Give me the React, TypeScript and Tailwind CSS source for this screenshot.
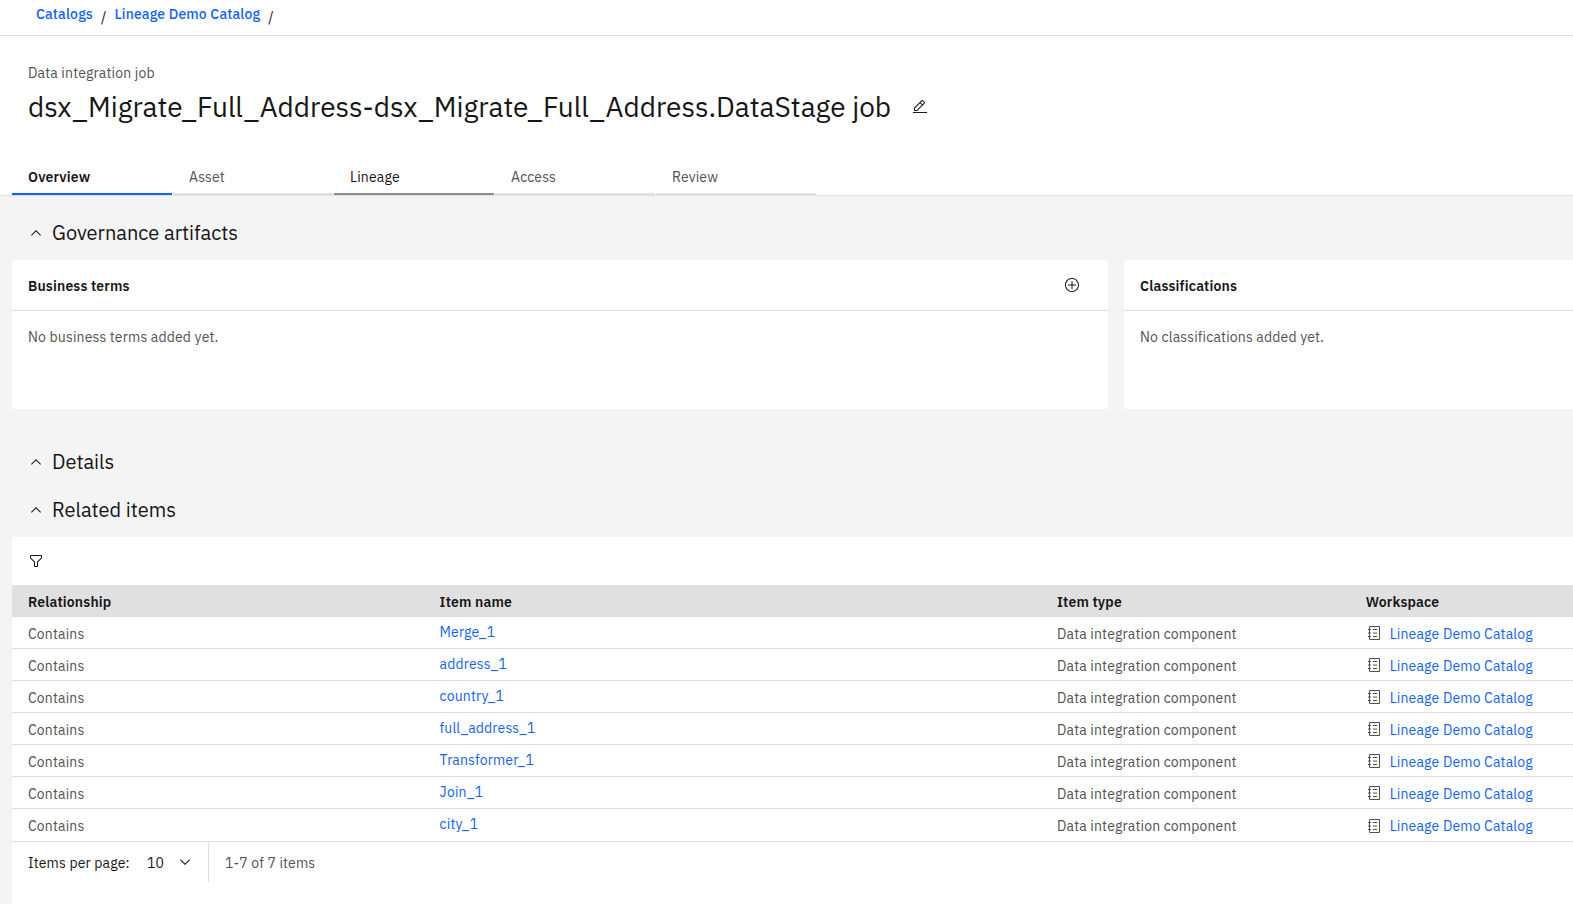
import React from 'react';

type IconProps = { paths: string[]; size?: 16 | 32; className?: string };

function Icon({ paths, size = 32, className = '' }: IconProps) {
  return (
    <svg viewBox={`0 0 ${size} ${size}`} className={`h-4 w-4 shrink-0 fill-current ${className}`} aria-hidden="true">
      {paths.map((d) => (
        <path key={d} d={d} />
      ))}
    </svg>
  );
}

const edit = [
  'M2 26H30V28H2z',
  'M25.4 9c.8-.8.8-2 0-2.8l-3.6-3.6c-.8-.8-2-.8-2.8 0l-15 15V24h6.4L25.4 9zM20.4 4L24 7.6l-3 3L17.4 7 20.4 4zM6 22v-3.6l10-10 3.6 3.6-10 10H6z',
];
const chevronUp = ['M8 5L13 10 12.3 10.7 8 6.4 3.7 10.7 3 10z'];
const chevronDown = ['M8 11L3 6 3.7 5.3 8 9.6 12.3 5.3 13 6z'];
const addAlt = [
  'M16 4c6.6 0 12 5.4 12 12s-5.4 12-12 12S4 22.6 4 16 9.4 4 16 4M16 2C8.3 2 2 8.3 2 16s6.3 14 14 14 14-6.3 14-14S23.7 2 16 2z',
  'M24 15L17 15 17 8 15 8 15 15 8 15 8 17 15 17 15 24 17 24 17 17 24 17z',
];
const filter = [
  'M18 28H14a2 2 0 0 1-2-2V18.41L4.59 11A2 2 0 0 1 4 9.59V6A2 2 0 0 1 6 4H26a2 2 0 0 1 2 2V9.59A2 2 0 0 1 27.41 11L20 18.41V26A2 2 0 0 1 18 28ZM6 6V9.59l8 8V26h4V17.59l8-8V6Z',
];
const catalog = [
  'M26 2H8A2 2 0 0 0 6 4V8H4v2H6v5H4v2H6v5H4v2H6v4a2 2 0 0 0 2 2H26a2 2 0 0 0 2-2V4A2 2 0 0 0 26 2Zm0 26H8V24h2V22H8V17h2V15H8V10h2V8H8V4H26Z',
  'M14 8H22V10H14z',
  'M14 15H22V17H14z',
  'M14 22H22V24H14z',
];

const tabs = [
  { label: 'Overview', style: 'border-[#0f62fe] font-semibold text-[#161616]' },
  { label: 'Asset', style: 'border-[#e0e0e0] text-[#525252]' },
  { label: 'Lineage', style: 'border-[#8d8d8d] text-[#161616]' },
  { label: 'Access', style: 'border-[#e0e0e0] text-[#525252]' },
  { label: 'Review', style: 'border-[#e0e0e0] text-[#525252]' },
];

const items = ['Merge_1', 'address_1', 'country_1', 'full_address_1', 'Transformer_1', 'Join_1', 'city_1'];

function SectionTitle({ children }: { children: React.ReactNode }) {
  return (
    <h2 className="flex h-12 items-center gap-2 pl-7 text-xl leading-7 tracking-normal">
      <Icon paths={chevronUp} size={16} />
      {children}
    </h2>
  );
}

function Card({ title, text, className, action }: { title: string; text: string; className: string; action?: boolean }) {
  return (
    <section className={`h-[149px] shrink-0 bg-white ${className}`}>
      <header className="flex h-[51px] items-center justify-between border-b border-[#e0e0e0] pr-7 pl-4">
        <h3 className="pt-0.5 font-semibold">{title}</h3>
        {action && <Icon paths={addAlt} />}
      </header>
      <p className="px-4 pt-[17px] text-[#525252]">{text}</p>
    </section>
  );
}

export default function App() {
  return (
    <div className="h-[904px] w-full overflow-hidden bg-[#f4f4f4] font-['IBM_Plex_Sans',Roboto,sans-serif] text-sm leading-[18px] tracking-[0.16px] text-[#161616]">
      <nav className="flex h-9 gap-2 border-b border-[#e0e0e0] bg-white pt-[5px] pl-9">
        <a className="font-medium text-[#0f62fe]">Catalogs</a>
        <span className="pt-[3px]">/</span>
        <a className="font-medium text-[#0f62fe]">Lineage Demo Catalog</a>
        <span className="pt-[3px]">/</span>
      </nav>

      <header className="h-40 border-b border-[#e0e0e0] bg-white pt-7">
        <p className="pl-7 text-[#525252]">Data integration job</p>
        <div className="mt-[7px] flex h-9 items-center gap-[21px] pl-7">
          <h1 className="text-[28px] leading-9 tracking-normal">
            dsx_Migrate_Full_Address-dsx_Migrate_Full_Address.DataStage job
          </h1>
          <Icon paths={edit} />
        </div>
        <div className="mt-[30px] flex gap-px pl-3">
          {tabs.map((tab) => (
            <button key={tab.label} className={`h-10 w-40 border-b-2 px-4 pt-[5px] text-left ${tab.style}`}>
              {tab.label}
            </button>
          ))}
        </div>
      </header>

      <div className="pt-[13px]">
        <SectionTitle>Governance artifacts</SectionTitle>
      </div>
      <div className="mt-[3px] flex gap-4 pl-3">
        <Card title="Business terms" text="No business terms added yet." className="w-[1096px]" action />
        <Card title="Classifications" text="No classifications added yet." className="w-[540px]" />
      </div>

      <div className="pt-[29px]">
        <SectionTitle>Details</SectionTitle>
        <SectionTitle>Related items</SectionTitle>
      </div>

      <section className="mt-[3px] ml-3 h-[367px] bg-white">
        <div className="flex h-12 items-center pl-4">
          <Icon paths={filter} />
        </div>
        <div className="grid h-8 grid-cols-[411.6px_617.4px_308.7px_1fr] items-center bg-[#e0e0e0] pt-0.5 pl-4 font-semibold">
          <span>Relationship</span>
          <span>Item name</span>
          <span>Item type</span>
          <span>Workspace</span>
        </div>
        {items.map((name, index) => (
          <div
            key={name}
            className="grid h-8 grid-cols-[411.6px_617.4px_308.7px_1fr] border-b border-[#e0e0e0] pt-2 pl-4 text-[#525252] last-of-type:border-b-0"
          >
            <span>Contains</span>
            <a className="-mt-0.5 text-[#0f62fe]">{name}</a>
            <span>Data integration component</span>
            <span className="flex gap-2">
              <Icon paths={catalog} className={index === items.length - 1 ? 'mt-px' : ''} />
              <a className="text-[#0f62fe]">Lineage Demo Catalog</a>
            </span>
          </div>
        ))}
        <footer className="flex h-[41px] border-t border-[#e0e0e0]">
          <div className="flex w-[197px] border-r border-[#e0e0e0] pt-3 pl-4">
            <span className="w-[119px]">Items per page:</span>
            <span className="w-[30px]">10</span>
            <Icon paths={chevronDown} size={16} />
          </div>
          <span className="pt-3 pl-4 text-[#525252]">1-7 of 7 items</span>
        </footer>
      </section>
    </div>
  );
}
